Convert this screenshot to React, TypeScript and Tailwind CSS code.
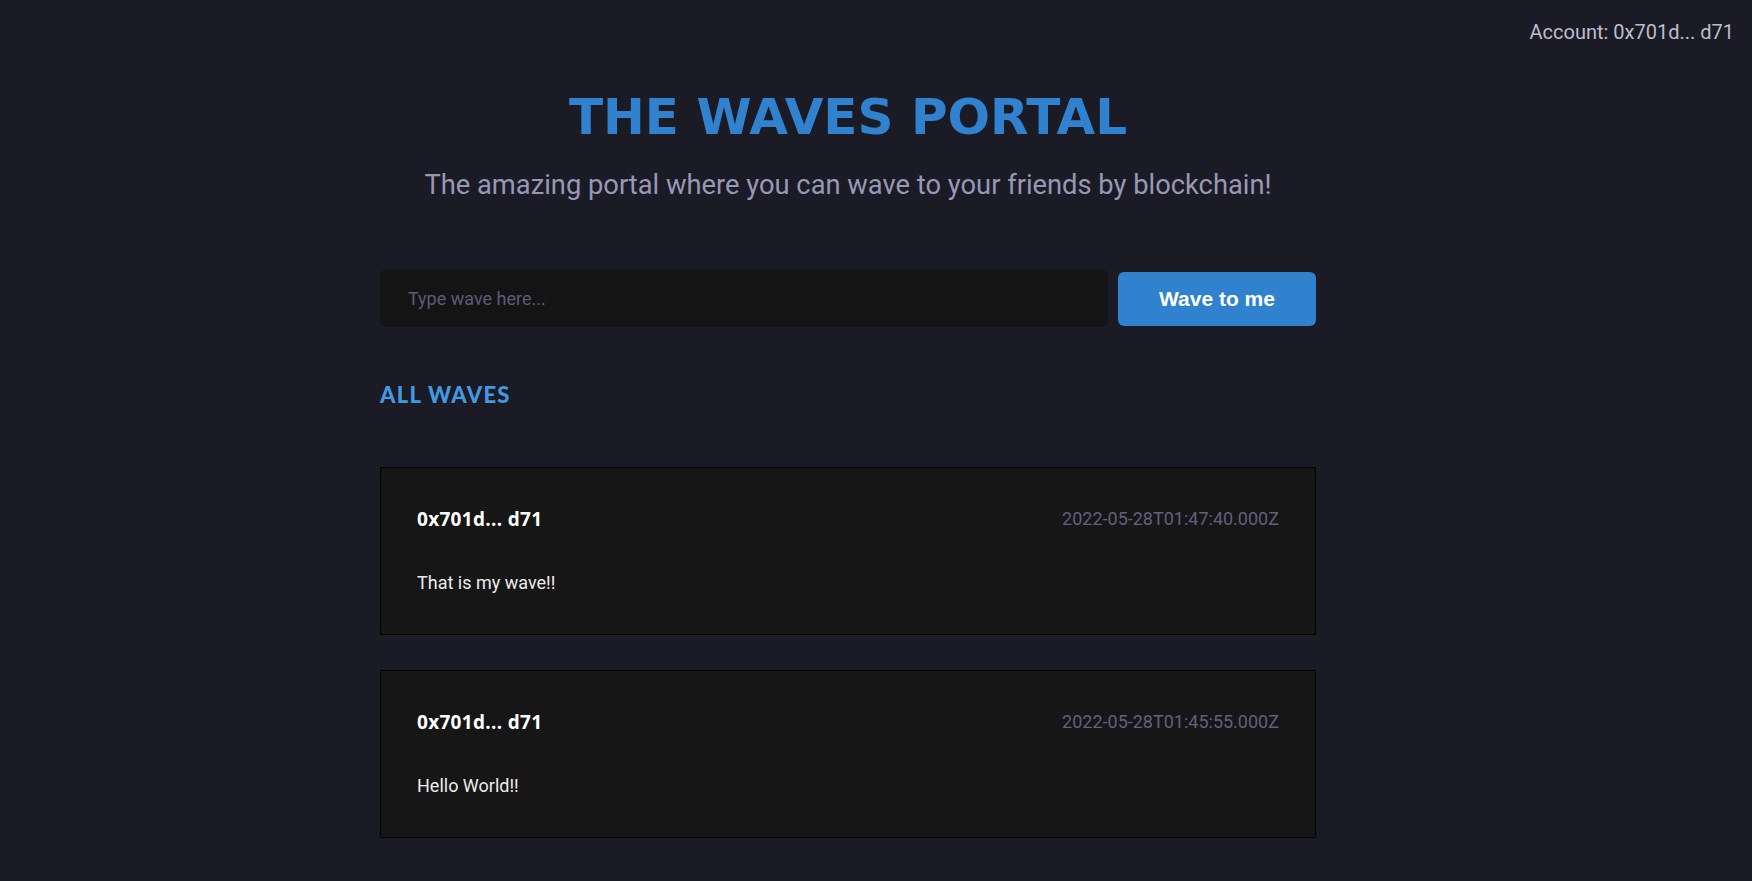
import React from "react";

const waves = [
  { address: "0x701d... d71", time: "2022-05-28T01:47:40.000Z", message: "That is my wave!!" },
  { address: "0x701d... d71", time: "2022-05-28T01:45:55.000Z", message: "Hello World!!" },
];

export default function App() {
  return (
    <div className="min-h-screen w-full bg-[#1a1b25] font-['Roboto',sans-serif]">
      <div className="flex justify-end pt-[20px] pr-[18px]">
        <span className="text-[20px] leading-[24px] text-[#bdbdce]">Account: 0x701d... d71</span>
      </div>
      <div className="pr-[56px]">
        <div className="mx-auto flex w-[936px] flex-col">
          <h1 className="mt-[48px] text-center font-['DejaVu_Sans',sans-serif] text-[50px] font-bold leading-none text-[#3182ce]">
            THE WAVES PORTAL
          </h1>
          <p className="mt-[29px] text-center text-[27.3px] leading-[28px] text-[#9898b6]">
            The amazing portal where you can wave to your friends by blockchain!
          </p>
          <div className="mt-[71px] flex items-center gap-[10px]">
            <input
              className="h-[57px] flex-1 rounded-[6px] bg-[#141414] pl-[28px] text-[18px] text-white outline-none placeholder:text-[#5b5b7b]"
              placeholder="Type wave here..."
            />
            <button className="h-[54px] w-[198px] rounded-[6px] bg-[#3182ce] font-['Liberation_Sans',sans-serif] text-[21px] font-bold text-white">
              Wave to me
            </button>
          </div>
          <h2 className="mt-[57px] font-['Lato',sans-serif] text-[22px] font-black leading-none tracking-[1.25px] text-[#4299e1]">
            ALL WAVES
          </h2>
          <div className="mt-[61px] flex flex-col gap-[35px]">
            {waves.map((w, i) => (
              <div key={i} className="border border-black bg-[#161616] px-9 pt-[37px] pb-[37px]">
                <div className="flex h-[28px] items-center justify-between">
                  <span className="font-['Open_Sans',sans-serif] text-[19px] font-bold leading-[28px] tracking-[0.3px] text-white">
                    {w.address}
                  </span>
                  <span className="text-[18px] leading-[28px] text-[#60607f]">{w.time}</span>
                </div>
                <p className="mt-9 text-[18px] leading-[28px] text-[#ececec]">{w.message}</p>
              </div>
            ))}
          </div>
        </div>
      </div>
    </div>
  );
}
